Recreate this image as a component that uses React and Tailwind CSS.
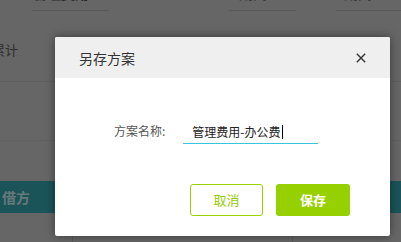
import React from "react";

const font = { fontFamily: '"Noto Sans CJK SC", "Noto Sans", sans-serif' };

export default function App() {
  return (
    <div
      className="relative w-[401px] h-[242px] overflow-hidden bg-[#666666]"
      style={font}
    >
      {/* background page (dimmed) */}
      <div className="flex flex-col w-full h-full">
        <div className="relative h-[11px] flex">
          <div className="ml-[32px] w-[77px] h-[11px] border-b border-[#585858] flex items-end overflow-hidden">
            <span className="text-[14px] font-bold text-[#2a2a2a] leading-none mb-[10px] ml-[1px]">管理费用</span>
          </div>
          <div className="ml-[120px] w-[67px] h-[11px] border-b border-[#585858] flex items-end overflow-hidden">
            <span className="text-[14px] text-[#3a3a3a] leading-none mb-[10px] ml-[10px]">期间</span>
          </div>
          <div className="ml-[40px] flex-1 h-[11px] border-b border-[#585858] flex items-end overflow-hidden">
            <span className="text-[14px] text-[#3a3a3a] leading-none mb-[10px] ml-[8px]">期间</span>
          </div>
        </div>
        <div className="h-[71px] border-b border-[#5f5f5f] flex items-center">
          <span className="text-[13px] text-[#2e2e2e] -ml-[8px] mt-[8px]">累计</span>
        </div>
        <div className="h-[59px] border-b border-[#606060]" />
        <div className="h-[40px]" />
        <div className="h-[32px] bg-[#1a5459] flex items-center">
          <span className="text-[14px] font-bold text-[#67797a] ml-[2px]">借方</span>
        </div>
        <div className="flex-1 flex">
          <div className="w-[73px] border-r border-[#5a5a5a]" />
          <div className="w-[220px] border-r border-[#5a5a5a]" />
        </div>
      </div>

      {/* dialog */}
      <div className="absolute left-[55px] top-[37px] w-[335px] h-[199px] bg-white rounded-[2px] shadow-[0_0_10px_rgba(0,0,0,0.45)] flex flex-col">
        <div className="h-[41px] bg-[#efefef] rounded-t-[2px] flex items-center justify-between pl-[24px] pr-[24px]">
          <span className="text-[14px] text-[#333333] leading-none">另存方案</span>
          <svg width="10" height="10" viewBox="0 0 10 10" className="block">
            <path d="M0.8 0.8 L9.2 9.2 M9.2 0.8 L0.8 9.2" stroke="#333" strokeWidth="1.4" fill="none" />
          </svg>
        </div>
        <div className="flex flex-col pt-[42px]">
          <div className="flex items-center pl-[59px]">
            <span className="text-[12px] text-[#555555] leading-none mt-[-2px]">方案名称:</span>
            <div className="ml-[18px] w-[135px] h-[24px] border-b border-[#3ec3dc] flex items-center pl-[9px]">
              <span className="text-[12px] text-[#222222] leading-none">管理费用-办公费</span>
              <span className="w-px h-[14px] bg-black ml-[1px]" />
            </div>
          </div>
          <div className="flex justify-end gap-[13px] pr-[40px] mt-[40px]">
            <button className="w-[73px] h-[32px] rounded-[3px] border border-[#9ad000] text-[#96cc00] text-[13px] flex items-center justify-center">
              取消
            </button>
            <button className="w-[74px] h-[32px] rounded-[3px] bg-[#96d000] text-white text-[13px] font-bold flex items-center justify-center">
              保存
            </button>
          </div>
        </div>
      </div>
    </div>
  );
}
